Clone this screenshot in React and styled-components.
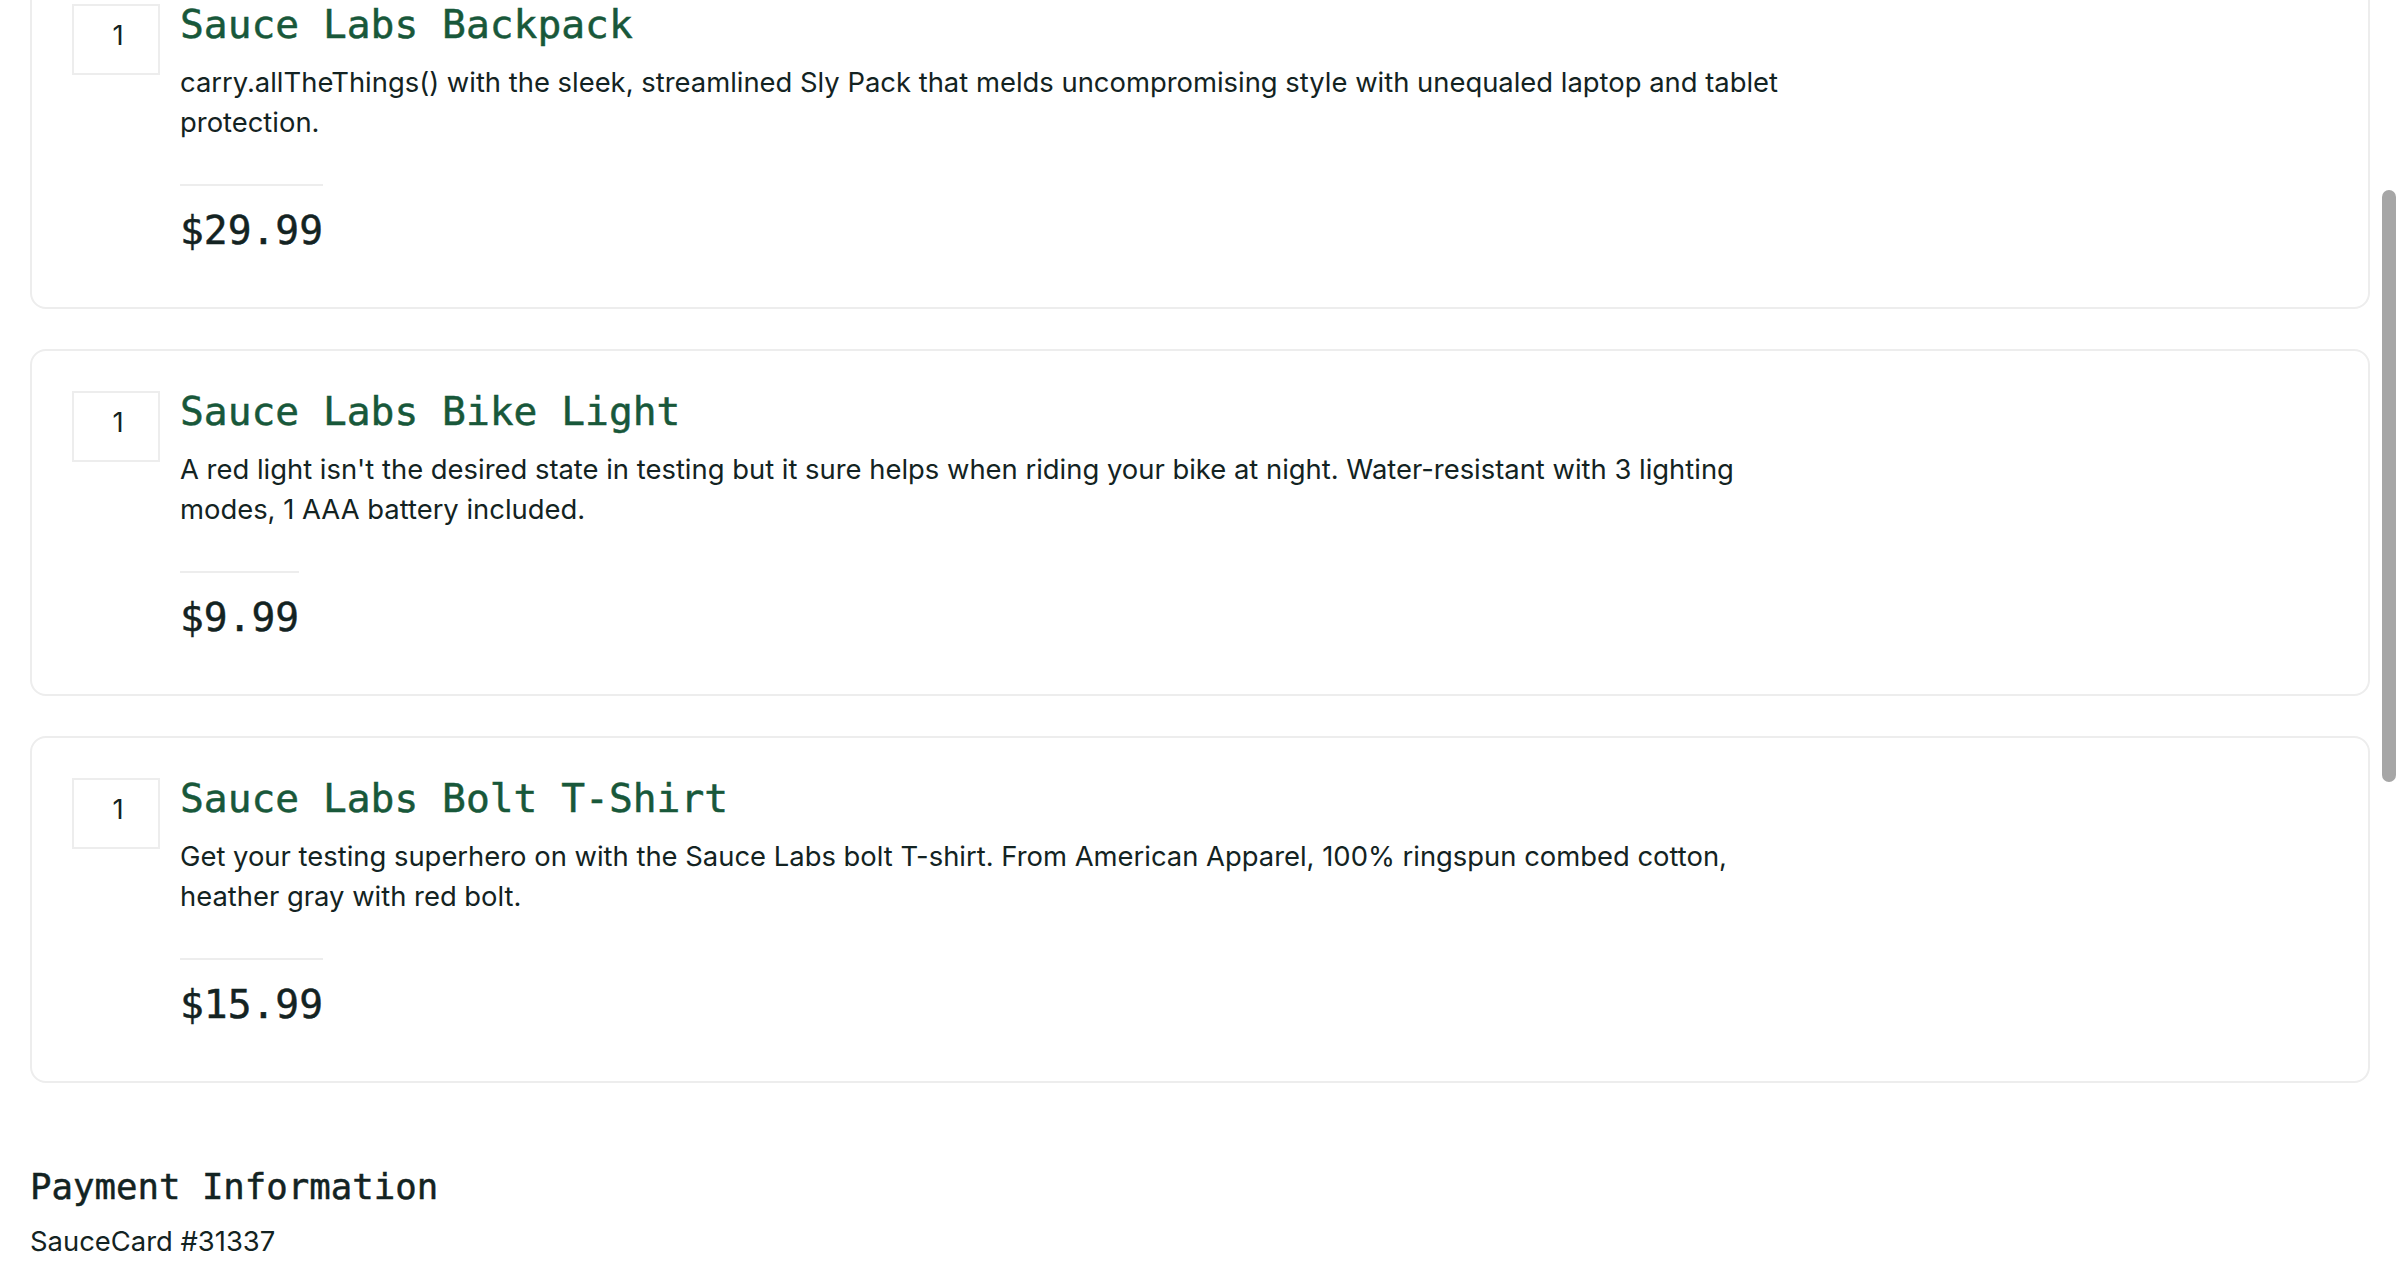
import React from 'react';
import styled, { createGlobalStyle } from 'styled-components';

const GlobalStyle = createGlobalStyle`
  html, body {
    margin: 0;
    padding: 0;
    background: #ffffff;
    overflow: hidden;
  }
  body {
    font-family: Inter, "Noto Sans", sans-serif;
    color: #132322;
  }
`;

const cartItems = [
  {
    id: 4,
    qty: 1,
    name: 'Sauce Labs Backpack',
    desc:
      'carry.allTheThings() with the sleek, streamlined Sly Pack that melds uncompromising style with unequaled laptop and tablet protection.',
    price: 29.99,
  },
  {
    id: 0,
    qty: 1,
    name: 'Sauce Labs Bike Light',
    desc:
      "A red light isn't the desired state in testing but it sure helps when riding your bike at night. Water-resistant with 3 lighting modes, 1 AAA battery included.",
    price: 9.99,
  },
  {
    id: 1,
    qty: 1,
    name: 'Sauce Labs Bolt T-Shirt',
    desc:
      'Get your testing superhero on with the Sauce Labs bolt T-shirt. From American Apparel, 100% ringspun combed cotton, heather gray with red bolt.',
    price: 15.99,
  },
];

/**
 * Checkout overview, scrolled part way down the page:
 * the cart rows, then the payment info block.
 */
export default function App() {
  return (
    <>
      <GlobalStyle />
      <Viewport>
        <Page>
          <CartList>
            {cartItems.map(item => (
              <CartItem key={item.id} item={item} />
            ))}
          </CartList>
          <InfoLabel>Payment Information</InfoLabel>
          <InfoValue>SauceCard #31337</InfoValue>
        </Page>
      </Viewport>
      <ScrollThumb />
    </>
  );
}

const CartItem = ({ item }) => (
  <Card>
    <Quantity>{item.qty}</Quantity>
    <Label>
      <ItemName>{item.name}</ItemName>
      <ItemDesc>{item.desc}</ItemDesc>
      <ItemPrice>${item.price.toFixed(2)}</ItemPrice>
    </Label>
  </Card>
);

const Viewport = styled.div`
  height: 100vh;
  overflow: hidden;
`;

// the page is scrolled down, so the first card sits partly above the top
const Page = styled.main`
  margin-top: -38px;
  padding: 0 30px;
`;

const CartList = styled.div`
  display: flex;
  flex-direction: column;
  gap: 40px;
  margin-bottom: 80px;
`;

const Card = styled.div`
  display: flex;
  align-items: flex-start;
  border: 2px solid #ededed;
  border-radius: 16px;
  padding: 40px;
`;

const Quantity = styled.div`
  flex-shrink: 0;
  box-sizing: border-box;
  width: 88px;
  height: 71px;
  margin-right: 20px;
  padding: 0 0 8px 4px;
  border: 2px solid #ededed;
  display: flex;
  align-items: center;
  justify-content: center;
  font-size: 27.4px;
  line-height: 1;
  color: #132322;
`;

const Label = styled.div`
  display: flex;
  flex-direction: column;
  align-items: flex-start;
`;

const mono = `
  font-family: "DejaVu Sans Mono", "Liberation Mono", monospace;
  -webkit-text-stroke: 0.5px currentColor;
`;

const ItemName = styled.div`
  ${mono}
  font-size: 39.6px;
  line-height: 40px;
  color: #18583a;
`;

const ItemDesc = styled.div`
  margin-top: 18px;
  margin-bottom: 2px;
  max-width: 1620px;
  font-size: 27.4px;
  line-height: 40px;
  color: #132322;
`;

const ItemPrice = styled.div`
  ${mono}
  margin-top: 40px;
  padding: 20px 0 13px;
  border-top: 2px solid #ededed;
  font-size: 39.6px;
  line-height: 48px;
  color: #132322;
`;

const InfoLabel = styled.div`
  ${mono}
  font-size: 35.7px;
  line-height: 48px;
  color: #132322;
`;

const InfoValue = styled.div`
  margin-top: 10px;
  font-size: 27.4px;
  line-height: 40px;
  color: #132322;
`;

const ScrollThumb = styled.div`
  position: fixed;
  top: 190px;
  right: 4px;
  width: 14px;
  height: 592px;
  border-radius: 7px;
  background: #a6a6a6;
`;
